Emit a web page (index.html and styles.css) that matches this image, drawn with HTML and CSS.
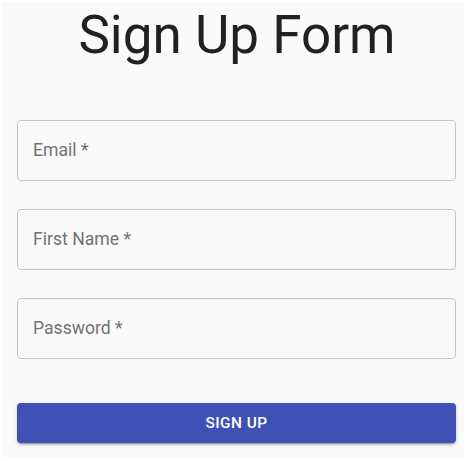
FILE: index.html
```html
<!DOCTYPE html>
<html lang="en">
<head>
<meta charset="utf-8">
<title>Sign Up Form</title>
<link rel="stylesheet" href="styles.css">
</head>
<body>
<main class="page">
  <h1 class="title">Sign Up Form</h1>
  <form class="form">
    <div class="field"><span class="label">Email *</span></div>
    <div class="field"><span class="label">First Name *</span></div>
    <div class="field"><span class="label">Password *</span></div>
    <button type="button" class="submit">Sign Up</button>
  </form>
</main>
</body>
</html>
```
FILE: styles.css
```css
html, body {
  margin: 0;
  padding: 0;
  background: #ffffff;
}
body {
  font-family: Roboto, "Liberation Sans", Arial, sans-serif;
}
.page {
  box-sizing: border-box;
  margin: 2px 10px 0 2px;
  height: 455px;
  background: #fafafa;
  padding-top: 2px;
}
.title {
  margin: 0;
  font-size: 53px;
  line-height: 62px;
  font-weight: 400;
  color: #212121;
  text-align: center;
  padding-left: 8px;
}
.form {
  display: flex;
  flex-direction: column;
  width: 439px;
  margin: 54px 0 0 15px;
}
.field {
  box-sizing: border-box;
  height: 61px;
  border: 1px solid #c4c4c4;
  border-radius: 4px;
  display: flex;
  align-items: center;
  padding-left: 15px;
  margin-bottom: 28px;
}
.label {
  font-size: 17.6px;
  line-height: 1;
  color: #727272;
}
.submit {
  margin-top: 16px;
  height: 40px;
  border: none;
  border-radius: 4px;
  background: #3f51b5;
  color: #ffffff;
  font-family: Roboto, "Liberation Sans", Arial, sans-serif;
  font-size: 15.4px;
  font-weight: 500;
  letter-spacing: 0.44px;
  text-transform: uppercase;
  box-shadow: 0 3px 1px -2px rgba(0,0,0,0.2), 0 2px 2px 0 rgba(0,0,0,0.14), 0 1px 5px 0 rgba(0,0,0,0.12);
  cursor: pointer;
}
```
